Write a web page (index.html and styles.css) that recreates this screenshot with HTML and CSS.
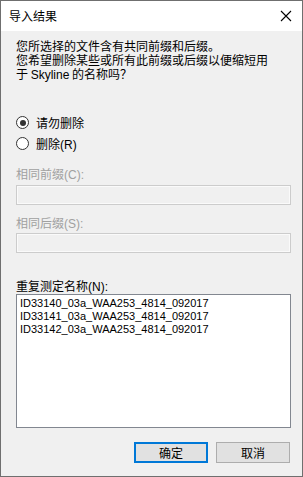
FILE: index.html
```html
<!DOCTYPE html>
<html lang="zh-CN">
<head>
    <title>导入结果</title>
    <link rel="stylesheet" href="styles.css">
</head>
<body>
    <div class="window">
        <div class="titlebar">
            <span class="title">导入结果</span>
            <svg class="close" width="12" height="12" viewBox="0 0 12 12">
                <path d="M1 1 L11 11 M11 1 L1 11" stroke="#000" stroke-width="1.1" fill="none"/>
            </svg>
        </div>

        <div class="content">
            <p class="message">您所选择的文件含有共同前缀和后缀。<br>您希望删除某些或所有此前缀或后缀以便缩短用<br>于 <span class="latin">Skyline</span> 的名称吗？</p>

            <div class="options">
                <label class="radio-row">
                    <span class="radio checked"></span>
                    <span>请勿删除</span>
                </label>
                <label class="radio-row">
                    <span class="radio"></span>
                    <span>删除<span class="latin">(R)</span></span>
                </label>
            </div>

            <div class="label disabled prefix-label">相同前缀<span class="latin">(C):</span></div>
            <div class="textbox"></div>

            <div class="label disabled suffix-label">相同后缀<span class="latin">(S):</span></div>
            <div class="textbox"></div>

            <div class="label list-label">重复测定名称<span class="latin">(N):</span></div>
            <div class="listbox">
                <div class="item">ID33140_03a_WAA253_4814_092017</div>
                <div class="item">ID33141_03a_WAA253_4814_092017</div>
                <div class="item">ID33142_03a_WAA253_4814_092017</div>
            </div>

            <div class="buttons">
                <button class="btn default">确定</button>
                <button class="btn">取消</button>
            </div>
        </div>
    </div>
</body>
</html>
```

FILE: styles.css
```css
html, body {
    margin: 0;
    padding: 0;
}

body {
    font-family: "Noto Sans CJK SC", sans-serif;
    font-size: 12px;
    color: #000;
    background: #f0f0f0;
}

.window {
    width: 303px;
    height: 477px;
    box-sizing: border-box;
    border: 1px solid #6f6f6f;
    background: #f0f0f0;
    display: flex;
    flex-direction: column;
}

.titlebar {
    height: 30px;
    background: #fff;
    display: flex;
    align-items: center;
    justify-content: space-between;
    padding: 0 10px 0 8px;
    flex-shrink: 0;
}

.title {
    font-size: 12px;
    line-height: 14px;
}

.close {
    display: block;
}

.content {
    padding: 0 11px 0 15px;
}

.latin {
    font-family: "Liberation Sans", Arial, sans-serif;
    line-height: 1;
}

.message {
    margin: 8px 0 0;
    height: 42px;
    line-height: 14px;
}

.options {
    margin-top: 35px;
    display: flex;
    flex-direction: column;
    gap: 8px;
}

.radio-row {
    display: flex;
    align-items: center;
    gap: 7px;
    height: 13px;
    line-height: 13px;
}

.radio {
    width: 11px;
    height: 11px;
    border: 1px solid #333;
    border-radius: 50%;
    background: #fff;
    position: relative;
    flex-shrink: 0;
}

.radio.checked::after {
    content: "";
    position: absolute;
    left: 2.5px;
    top: 2.5px;
    width: 6px;
    height: 6px;
    border-radius: 50%;
    background: #333;
}

.label {
    height: 13px;
    line-height: 13px;
}

.disabled {
    color: #a0a0a0;
}

.prefix-label {
    margin-top: 17px;
}

.suffix-label {
    margin-top: 11px;
}

.textbox {
    margin-top: 5px;
    height: 20px;
    box-sizing: border-box;
    border: 1px solid #cccccc;
    box-shadow: inset 0 0 0 1px #fafafa;
    background: #f0f0f0;
}

.suffix-label + .textbox {
    margin-top: 4px;
}

.list-label {
    margin-top: 26px;
}

.listbox {
    margin-top: 2px;
    height: 134px;
    box-sizing: border-box;
    border: 1px solid #828790;
    background: #fff;
    padding: 2px 3px;
}

.item {
    font-family: "Liberation Sans", Arial, sans-serif;
    font-size: 11px;
    line-height: 13px;
}

.buttons {
    margin-top: 14px;
    display: flex;
    justify-content: flex-end;
    gap: 8px;
    padding-right: 1px;
}

.btn {
    font-family: "Noto Sans CJK SC", sans-serif;
    font-size: 12px;
    width: 74px;
    height: 21px;
    padding: 0;
    background: #e1e1e1;
    border: 1px solid #adadad;
    color: #000;
    line-height: 17px;
}

.btn.default {
    border: 2px solid #0078d7;
}
```
